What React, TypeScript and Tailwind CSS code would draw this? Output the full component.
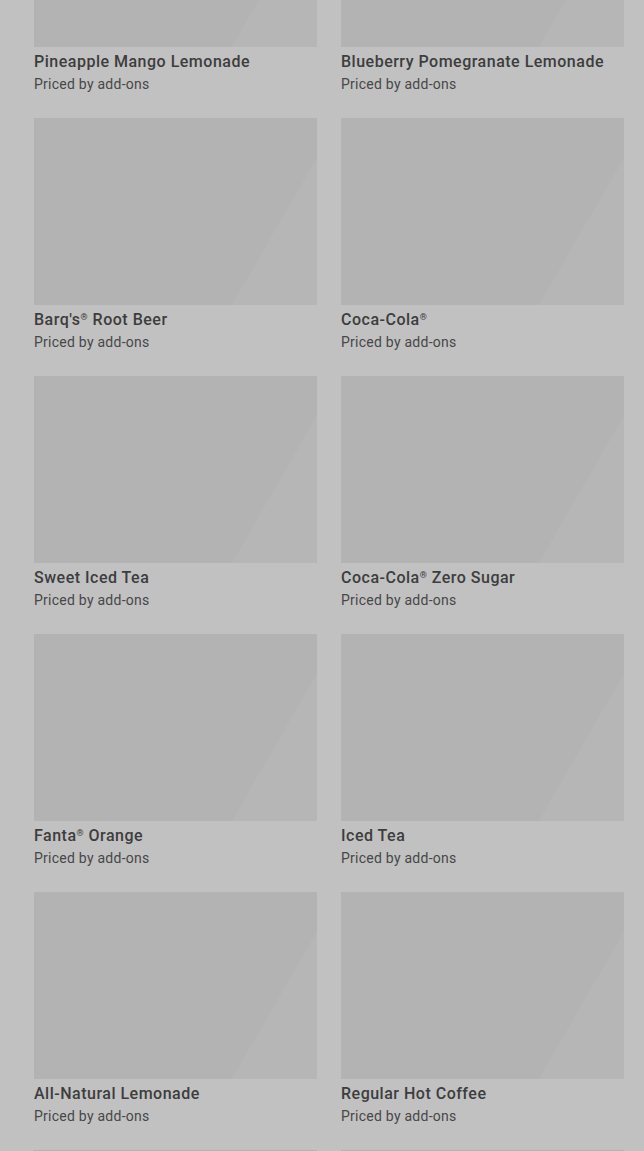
type Item = { name: string; mark?: boolean; rest?: string };

const items: Item[] = [
  { name: "Pineapple Mango Lemonade" },
  { name: "Blueberry Pomegranate Lemonade" },
  { name: "Barq's", mark: true, rest: " Root Beer" },
  { name: "Coca-Cola", mark: true },
  { name: "Sweet Iced Tea" },
  { name: "Coca-Cola", mark: true, rest: " Zero Sugar" },
  { name: "Fanta", mark: true, rest: " Orange" },
  { name: "Iced Tea" },
  { name: "All-Natural Lemonade" },
  { name: "Regular Hot Coffee" },
];

const thumb =
  "h-[187px] w-full bg-[linear-gradient(120deg,#b3b3b3_0%,#b3b3b3_78%,#b6b6b6_78.5%,#b6b6b6_100%)]";

function ItemCard({ item }: { item: Item }) {
  return (
    <div className="flex flex-col">
      <div className={thumb} />
      <div className="mt-[3px] truncate text-[16px] leading-[24px] font-medium tracking-[0.5px] text-[#3d3d3d]">
        {item.name}
        {item.mark && (
          <span className="relative -top-[5px] text-[9px] leading-none">®</span>
        )}
        {item.rest}
      </div>
      <div className="text-[14px] leading-[20px] tracking-[0.25px] text-[#474747]">
        Priced by add-ons
      </div>
    </div>
  );
}

export default function App() {
  return (
    <div
      className="h-[1151px] w-[644px] overflow-hidden bg-[#c1c1c1]"
      style={{ fontFamily: "Roboto, 'Liberation Sans', sans-serif" }}
    >
      <div className="-mt-[140px] grid grid-cols-[283px_283px] gap-x-6 gap-y-6 pl-[34px] pr-[20px]">
        {items.map((item, i) => (
          <ItemCard key={i} item={item} />
        ))}
        <div className={thumb} />
        <div className={thumb} />
      </div>
    </div>
  );
}
